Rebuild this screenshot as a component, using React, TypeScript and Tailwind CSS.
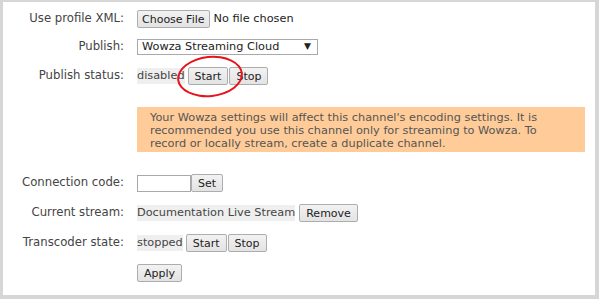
const btn =
  "h-[18px] px-[6px] border border-[#adadad] rounded-[2px] bg-gradient-to-b from-[#f2f2f2] to-[#e3e3e3] text-[11px] leading-none text-[#222]";

function Row({ label, children }: { label: string; children: React.ReactNode }) {
  return (
    <div className="flex items-center h-[18px]">
      <div className="w-[121px] text-right text-[11.7px] text-[#444]">{label}</div>
      <div className="ml-[13px] flex items-center text-[11.3px]">{children}</div>
    </div>
  );
}

export default function App() {
  return (
    <div className="w-[605px] h-[299px] bg-white" style={{ fontFamily: "'DejaVu Sans', Verdana, sans-serif" }}>
      <div className="relative w-[599px] h-[299px] border-t-[2px] border-l-[3px] border-r-[4px] border-b-[4px] border-[#d6d6d6] pt-[8px]">
        <div className="flex flex-col">
          <Row label="Use profile XML:">
            <button className={btn + " !px-[4px]"}>Choose File</button>
            <span className="ml-[4px] text-[#222]">No file chosen</span>
          </Row>
          <div className="h-[10px]" />
          <Row label="Publish:">
            <div className="w-[181px] h-[16px] border border-[#a9a9a9] bg-white flex items-center justify-between pl-[4px] pr-[6px] text-[#222]">
              <span>Wowza Streaming Cloud</span>
              <span className="text-[9px]">▼</span>
            </div>
          </Row>
          <div className="h-[11px]" />
          <Row label="Publish status:">
            <span className="bg-[#efefef] text-[#444]">disabled</span>
            <button className={btn + " ml-[3px]"}>Start</button>
            <button className={btn + " ml-[1px]"}>Stop</button>
          </Row>
        </div>
        <div className="ml-[134px] mt-[22px] w-[448px] bg-[#ffcc99] pl-[13px] pr-[36px] pt-[4px] pb-[2px] text-[11.3px] text-[#555] leading-[13px]">
          Your Wowza settings will affect this channel's encoding settings. It is recommended you use this channel only for streaming to Wowza. To record or locally stream, create a duplicate channel.
        </div>
        <div className="flex flex-col gap-[12px] mt-[22px]">
          <Row label="Connection code:">
            <input className="w-[54px] h-[17px] border border-[#a9a9a9] bg-white" />
            <button className={btn}>Set</button>
          </Row>
          <Row label="Current stream:">
            <span className="bg-[#efefef] text-[#444]">Documentation Live Stream</span>
            <button className={btn + " ml-[4px]"}>Remove</button>
          </Row>
          <Row label="Transcoder state:">
            <span className="bg-[#efefef] text-[#444]">stopped</span>
            <button className={btn + " ml-[3px]"}>Start</button>
            <button className={btn + " ml-[1px]"}>Stop</button>
          </Row>
          <Row label="">
            <button className={btn}>Apply</button>
          </Row>
        </div>
        <div className="absolute left-[174px] top-[54px] w-[66px] h-[41px] rounded-[50%] border-2 border-[#e8141b] -rotate-6" />
      </div>
    </div>
  );
}
